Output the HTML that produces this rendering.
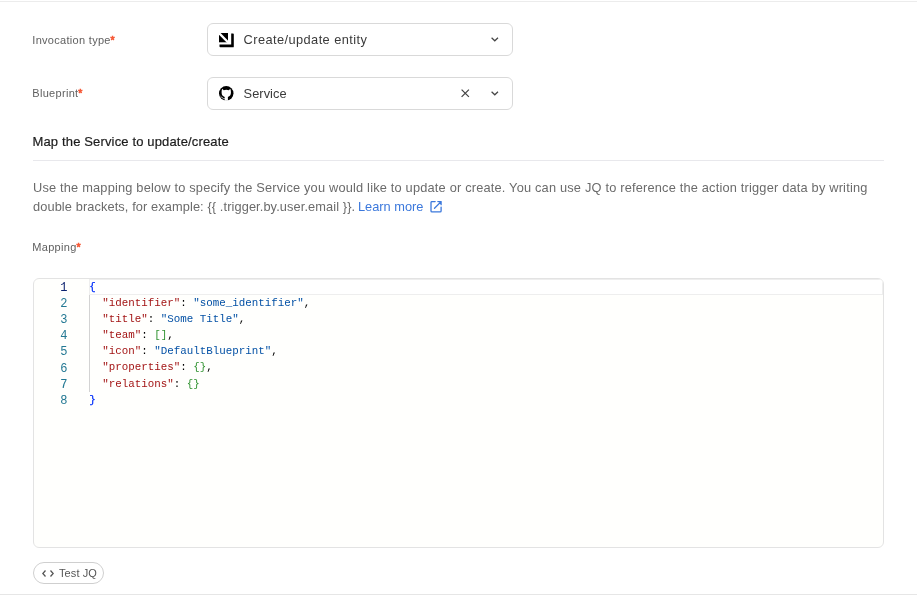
<!DOCTYPE html>
<html><head><meta charset="utf-8">
<style>
html,body{margin:0;padding:0;background:#fff;width:917px;height:596px;overflow:hidden;position:relative;font-family:"Liberation Sans",sans-serif;}
.abs{position:absolute;white-space:pre;}
.hr{position:absolute;height:1px;background:#e6e6e6;}
.lbl{position:absolute;font-size:11px;color:#606060;letter-spacing:0.3px;white-space:pre;line-height:14px;}
.req{color:#f65a38;font-size:10.5px;letter-spacing:0;margin-left:-0.2px;-webkit-text-stroke:0.7px #f65a38;}
.sel{position:absolute;left:207px;width:304px;height:31px;border:1px solid #d9d9d9;border-radius:6px;background:#fff;}
.seltxt{position:absolute;left:35.6px;top:8px;font-size:12.8px;color:#3a3a3a;letter-spacing:0.42px;white-space:pre;line-height:16px;}
.editor{position:absolute;left:33px;top:278px;width:849px;height:268px;border:1px solid #e3e3e3;border-radius:6px;background:#fffffd;overflow:hidden;}
.code{position:absolute;font-family:"Liberation Mono",monospace;font-size:10.83px;line-height:16.15px;white-space:pre;}
.ln{position:absolute;left:0;width:33.5px;text-align:right;color:#237893;font-size:12px;}
.k{color:#a31515}.s{color:#0451a5}.b1{color:#0431fa;-webkit-text-stroke:0.25px #0431fa}.b2{color:#319331}.p{color:#000}
</style></head><body><div style="position:absolute;left:0;top:0;width:917px;height:596px;will-change:transform">
<div class="hr" style="left:0;top:1px;width:917px;background:#ececec"></div>

<div class="lbl" style="left:32.3px;top:33px">Invocation type<span class="req">*</span></div>
<div class="sel" style="top:23px">
  <svg style="position:absolute;left:11px;top:8.6px" width="15" height="15" viewBox="0 0 15 15">
    <path d="M0 0H9V9.3H0Z" fill="#000"/>
    <path d="M-0.5 -0.5L9.5 9.8" stroke="#fff" stroke-width="2.3"/>
    <path d="M12.2 0.4H14Q14.8 0.4 14.8 1.2V13.4Q14.8 14.3 14 14.3H1.3Q0.5 14.3 0.5 13.5V11.6H12.2Z" fill="#000"/>
  </svg>
  <div class="seltxt">Create/update entity</div>
  <svg style="position:absolute;left:282.8px;top:12.6px" width="8" height="5" viewBox="0 0 8 5"><path d="M0.6 0.7L3.8 3.8L7 0.7" fill="none" stroke="#444" stroke-width="1.2"/></svg>
</div>

<div class="lbl" style="left:32.3px;top:86px">Blueprint<span class="req">*</span></div>
<div class="sel" style="top:77px">
  <svg style="position:absolute;left:11.2px;top:8px" width="15" height="15" viewBox="0 0 15 15">
    <circle cx="7.25" cy="7.35" r="7.25" fill="#000"/>
    <path fill="#fff" d="M3.2 2.8L4.7 4.2Q7.25 3.5 9.8 4.2L11.3 2.8Q12 4.6 11.95 6.6Q11.8 10.3 8.9 10.9L8.9 14.8L5.7 14.8L5.7 10.9Q2.7 10.3 2.6 6.6Q2.5 4.6 3.2 2.8Z"/>
    <path fill="none" stroke="#fff" stroke-width="0.8" d="M1.6 10.2Q2.6 10.9 3.4 11.9Q4.3 12.9 5.8 12.6"/>
  </svg>
  <div class="seltxt" style="letter-spacing:0.05px">Service</div>
  <svg style="position:absolute;left:253.3px;top:11px" width="9" height="9" viewBox="0 0 9 9"><path d="M0.6 0.6L7.9 7.9M7.9 0.6L0.6 7.9" fill="none" stroke="#444" stroke-width="1.25"/></svg>
  <svg style="position:absolute;left:282.8px;top:12.6px" width="8" height="5" viewBox="0 0 8 5"><path d="M0.6 0.7L3.8 3.8L7 0.7" fill="none" stroke="#444" stroke-width="1.2"/></svg>
</div>

<div class="abs" style="left:32.5px;top:134px;font-size:13px;color:#1c1c1c;letter-spacing:0.15px;line-height:16px;-webkit-text-stroke:0.2px #1c1c1c">Map the Service to update/create</div>
<div class="hr" style="left:33px;top:160px;width:851px;background:#e8e8ec"></div>

<div class="abs" style="left:33px;top:178px;font-size:12.8px;color:#6b6b6b;letter-spacing:0.19px;line-height:19.3px">Use the mapping below to specify the Service you would like to update or create. You can use JQ to reference the action trigger data by writing</div>
<div class="abs" style="left:33px;top:197.3px;font-size:12.8px;color:#6b6b6b;letter-spacing:0.1px;line-height:19.3px">double brackets, for example: {{ .trigger.by.user.email }}.</div>
<div class="abs" style="left:358px;top:197.3px;font-size:12.8px;color:#3b78dc;letter-spacing:0px;line-height:19.3px">Learn more</div>
<svg style="position:absolute;left:430px;top:201px" width="12" height="12" viewBox="0 0 12 12"><path d="M5.1 0.6H2Q1 0.6 1 1.6V9.9Q1 10.9 2 10.9H10.1Q11.1 10.9 11.1 9.9V6.1M7.9 0.6H11.1V3.7M11.1 0.6L4.5 7.3" fill="none" stroke="#3b78dc" stroke-width="1.3" stroke-linecap="round" stroke-linejoin="round"/></svg>

<div class="lbl" style="left:32.3px;top:240px">Mapping<span class="req">*</span></div>

<div class="editor">
  <div style="position:absolute;left:55px;top:0;width:794px;height:16.2px;border:1.8px solid #eeeeee;box-sizing:border-box;background:#fff"></div>
  <div style="position:absolute;left:55px;top:16px;width:1px;height:97px;background:#d3d3d3"></div>
  <div class="code" style="left:0;top:0.8px;width:40px;height:200px">
<div class="ln" style="top:0.0px;color:#0b216f">1</div>
<div class="ln" style="top:16.15px">2</div>
<div class="ln" style="top:32.3px">3</div>
<div class="ln" style="top:48.45px">4</div>
<div class="ln" style="top:64.6px">5</div>
<div class="ln" style="top:80.75px">6</div>
<div class="ln" style="top:96.9px">7</div>
<div class="ln" style="top:113.05px">8</div>
  </div>
  <div class="code p" style="left:55.3px;top:-0.4px"><span class="b1">{</span>
  <span class="k">"identifier"</span>: <span class="s">"some_identifier"</span>,
  <span class="k">"title"</span>: <span class="s">"Some Title"</span>,
  <span class="k">"team"</span>: <span class="b2">[]</span>,
  <span class="k">"icon"</span>: <span class="s">"DefaultBlueprint"</span>,
  <span class="k">"properties"</span>: <span class="b2">{}</span>,
  <span class="k">"relations"</span>: <span class="b2">{}</span>
<span class="b1">}</span></div>
</div>

<div style="position:absolute;left:33px;top:562px;width:69px;height:20px;border:1px solid #cfcfcf;border-radius:11px"></div>
<svg style="position:absolute;left:42px;top:570px" width="12" height="7" viewBox="0 0 12 7"><path d="M3.5 0.5L0.8 3.5L3.5 6.5M8.5 0.5L11.2 3.5L8.5 6.5" fill="none" stroke="#555" stroke-width="1.3"/></svg>
<div class="abs" style="left:59px;top:566px;font-size:11px;color:#555;letter-spacing:0.1px;line-height:14px">Test JQ</div>

<div class="hr" style="left:0;top:594px;width:917px;background:#e6e6e6"></div>
</div></body></html>
